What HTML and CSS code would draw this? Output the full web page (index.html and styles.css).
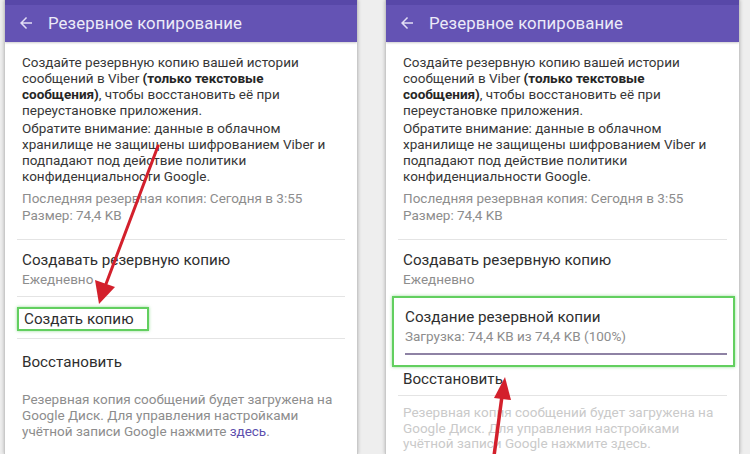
FILE: index.html
```html
<!DOCTYPE html>
<html lang="ru">
<head>
<meta charset="utf-8">
<link rel="stylesheet" href="styles.css">
</head>
<body>
<div class="page">
  <section class="phone phone-left">
    <header class="bar">
      <svg class="back" width="12" height="12" viewBox="4 4 16 16" aria-hidden="true"><path d="M20 11H7.83l5.59-5.59L12 4l-8 8 8 8 1.41-1.41L7.83 13H20v-2z" fill="#e2def5"/></svg>
      <span class="bar-title">Резервное копирование</span>
    </header>
    <div class="intro">
      <p class="para">Создайте резервную копию вашей истории<br>сообщений в Viber <b>(только текстовые<br>сообщения)</b>, чтобы восстановить её при<br>переустановке приложения.</p>
      <p class="para">Обратите внимание: данные в облачном<br>хранилище не защищены шифрованием Viber и<br>подпадают под действие политики<br>конфиденциальности Google.</p>
      <p class="meta">Последняя резервная копия: Сегодня в 3:55<br>Размер: 74,4 KB</p>
    </div>
    <div class="item item-two">
      <div class="item-title">Создавать резервную копию</div>
      <div class="item-sub">Ежедневно</div>
    </div>
    <div class="item item-one">
      <span class="item-title highlight">Создать копию</span>
    </div>
    <div class="item item-restore">
      <div class="item-title">Восстановить</div>
    </div>
    <p class="footer">Резервная копия сообщений будет загружена на<br>Google Диск. Для управления настройками<br>учётной записи Google нажмите <span class="link">здесь</span>.</p>
  </section>

  <section class="phone phone-right">
    <header class="bar">
      <svg class="back" width="12" height="12" viewBox="4 4 16 16" aria-hidden="true"><path d="M20 11H7.83l5.59-5.59L12 4l-8 8 8 8 1.41-1.41L7.83 13H20v-2z" fill="#e2def5"/></svg>
      <span class="bar-title">Резервное копирование</span>
    </header>
    <div class="intro">
      <p class="para">Создайте резервную копию вашей истории<br>сообщений в Viber <b>(только текстовые<br>сообщения)</b>, чтобы восстановить её при<br>переустановке приложения.</p>
      <p class="para">Обратите внимание: данные в облачном<br>хранилище не защищены шифрованием Viber и<br>подпадают под действие политики<br>конфиденциальности Google.</p>
      <p class="meta">Последняя резервная копия: Сегодня в 3:55<br>Размер: 74,4 KB</p>
    </div>
    <div class="item item-two item-noline">
      <div class="item-title">Создавать резервную копию</div>
      <div class="item-sub">Ежедневно</div>
    </div>
    <div class="progress-box">
      <div class="item-title">Создание резервной копии</div>
      <div class="item-sub">Загрузка: 74,4 KB из 74,4 KB (100%)</div>
      <div class="progress"></div>
    </div>
    <div class="item item-restore2">
      <div class="item-title">Восстановить</div>
    </div>
    <p class="footer faded">Резервная копия сообщений будет загружена на<br>Google Диск. Для управления настройками<br>учётной записи Google нажмите здесь.</p>
  </section>

  <svg class="arrows" width="750" height="454" viewBox="0 0 750 454" aria-hidden="true">
    <line x1="158" y1="146" x2="106" y2="284" stroke="#d3202c" stroke-width="3" stroke-linecap="round"/>
    <polygon points="99,304 95,280 115,287" fill="#d3202c"/>
    <line x1="494" y1="456" x2="502" y2="396" stroke="#d3202c" stroke-width="3.5" stroke-linecap="round"/>
    <polygon points="505,377 494,398 511,400" fill="#d3202c"/>
  </svg>
</div>
</body>
</html>
```
FILE: styles.css
```css
* { box-sizing: border-box; }
html, body { margin: 0; padding: 0; }
body {
  width: 750px;
  height: 454px;
  overflow: hidden;
  background: #eeeeee;
  font-family: Roboto, "Noto Sans", "Liberation Sans", sans-serif;
}
.page {
  position: relative;
  display: flex;
  gap: 27px;
  padding-left: 4px;
  padding-right: 10px;
  width: 750px;
  height: 454px;
}
.phone {
  flex: 0 0 354px;
  width: 354px;
  min-width: 0;
  height: 454px;
  background: #ffffff;
  border-left: 1px solid #c9c9c9;
  border-right: 1px solid #c9c9c9;
  box-shadow: 1px 0 3px rgba(0,0,0,0.12), -1px 0 3px rgba(0,0,0,0.12);
  overflow: hidden;
}
.phone-right { flex-basis: 355px; width: 355px; }
.bar {
  height: 42px;
  background: linear-gradient(#5848a8 0, #5848a8 5px, #6453b4 5px);
  display: flex;
  align-items: center;
  padding-left: 15px;
  padding-top: 3px;
  color: #ecebf8;
  box-shadow: 0 1px 2px rgba(0,0,0,0.2);
}
.back {
  display: block;
  margin-right: 16px;
}
.bar-title {
  font-size: 16.8px;
  letter-spacing: 0.1px;
}
.intro {
  margin: 0 12px;
  padding: 12px 5px 15px;
  border-bottom: 1px solid #e4e4e4;
  white-space: nowrap;
}
.para {
  margin: 0 0 2px;
  font-size: 13.5px;
  line-height: 16px;
  color: #373737;
}
.para b { font-weight: 700; color: #262626; }
.meta {
  margin: 6px 0 0;
  font-size: 13.5px;
  line-height: 17px;
  color: #8d8d8d;
}
.item {
  margin: 0 12px;
  padding: 0 5px;
  border-bottom: 1px solid #e4e4e4;
}
.item-noline { border-bottom: none; }
.item-title {
  font-size: 15.2px;
  line-height: 20px;
  color: #2e2e2e;
}
.item-sub {
  font-size: 13.5px;
  line-height: 18px;
  color: #8d8d8d;
}
.item-two { padding-top: 10px; padding-bottom: 8px; }
.item-one { padding: 10px 0 7px; }
.highlight {
  display: inline-block;
  padding: 1px 13px 1px 5px;
  border: 2px solid #62cf5f;
  box-shadow: 0 0 3px rgba(80,200,80,0.6);
  line-height: 18px;
}
.item-restore { padding-top: 13px; padding-bottom: 6px; border-bottom: none; }
.footer {
  margin: 13px 17px 0;
  font-size: 13.5px;
  line-height: 16px;
  color: #8d8d8d;
  white-space: nowrap;
}
.link { color: #5d4fae; }
.progress-box {
  margin: 0 4px 0 6px;
  padding: 9px 6px 10px 11px;
  border: 2px solid #62cf5f;
  box-shadow: 0 0 3px rgba(80,200,80,0.6);
}
.progress {
  margin-top: 8px;
  height: 2px;
  background: #8e82a4;
}
.item-restore2 { padding-top: 2px; padding-bottom: 6px; }
.faded { color: #cacaca; margin-top: 9px; line-height: 15.5px; }
.arrows {
  position: absolute;
  left: 0;
  top: 0;
  pointer-events: none;
}
```
